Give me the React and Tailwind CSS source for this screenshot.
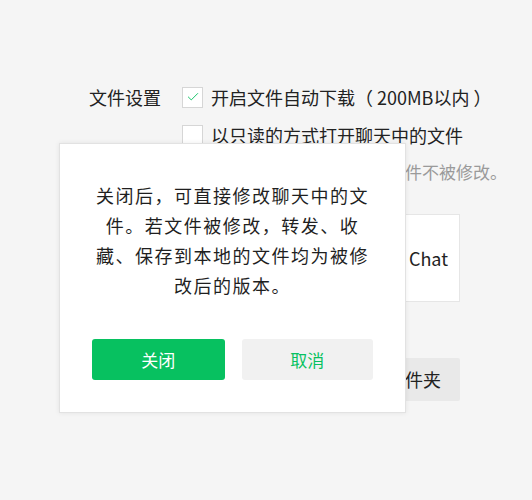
import { Check } from 'lucide-react'

const font = { fontFamily: '"Noto Sans CJK SC", "Noto Sans", sans-serif' }

function Checkbox({ checked }) {
  return (
    <span className="w-[21px] h-[21px] shrink-0 bg-white border border-[#d6d6d6] flex items-center justify-center">
      {checked && <Check size={14} strokeWidth={1.6} className="text-[#07c160]" />}
    </span>
  )
}

function SettingsPage() {
  return (
    <div className="pt-[84px] pl-[89px] text-[18px] text-[#222]">
      <div className="flex items-start">
        <div className="w-[93px] h-[26px] leading-[26px]">文件设置</div>
        <div className="flex flex-col">
          <div className="flex items-center gap-[8px] h-[26px]">
            <Checkbox checked />
            <span className="leading-[26px]">开启文件自动下载（ 200MB以内 ）</span>
          </div>
          <div className="flex items-center gap-[8px] h-[26px] mt-[12px]">
            <Checkbox />
            <span className="leading-[26px]">以只读的方式打开聊天中的文件</span>
          </div>
          <div className="pl-[19px] mt-[12px] text-[17px] leading-[24px] text-[#9a9a9a] whitespace-nowrap">
            开启后，聊天中打开的原文件不被修改。
          </div>
          <div className="w-[278px] flex flex-col">
            <div className="mt-[30px] h-[88px] bg-white border border-[#e6e6e6] flex items-center justify-end pr-[11px]">
              Chat
            </div>
            <div className="mt-[56px] self-end w-[128px] h-[43px] bg-[#e9e9e9] rounded-[2px] flex items-center justify-center">
              打开文件夹
            </div>
          </div>
        </div>
      </div>
    </div>
  )
}

function ConfirmDialog() {
  return (
    <div className="absolute left-[59px] top-[143px] w-[347px] h-[270px] bg-white border border-[#e2e2e2] shadow-[0_0_5px_rgba(0,0,0,0.08)] px-[32px] pt-[36px] flex flex-col">
      <p className="text-center text-[18px] tracking-[1.5px] leading-[30px] text-[#1f1f1f]">
        关闭后，可直接修改聊天中的文件。若文件被修改，转发、收藏、保存到本地的文件均为被修改后的版本。
      </p>
      <div className="mt-auto mb-[32px] flex gap-[17px]">
        <button className="w-[133px] h-[41px] rounded-[3px] bg-[#07c160] text-white text-[17px]">关闭</button>
        <button className="w-[132px] h-[41px] rounded-[3px] bg-[#f1f1f1] text-[#07c160] text-[17px]">取消</button>
      </div>
    </div>
  )
}

export default function App() {
  return (
    <div className="relative w-[532px] h-[500px] overflow-hidden bg-[#f5f5f5]" style={font}>
      <SettingsPage />
      <ConfirmDialog />
    </div>
  )
}
